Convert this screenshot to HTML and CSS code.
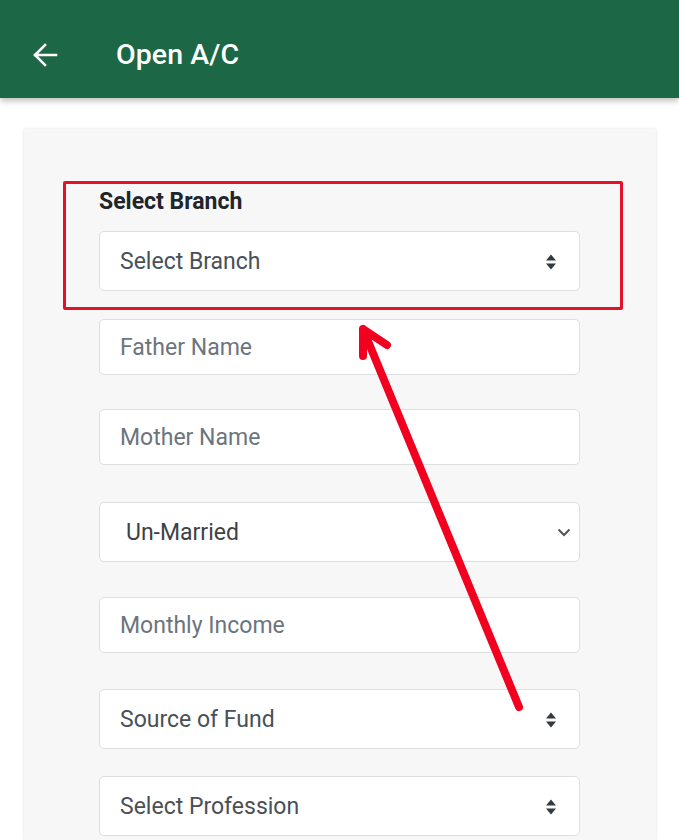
FILE: index.html
```html
<!DOCTYPE html>
<html>
<head>
<meta charset="utf-8">
<link rel="stylesheet" href="styles.css">
</head>
<body>
<header class="appbar">
  <svg class="back" width="26" height="26" viewBox="0 0 26 26"><path d="M24 13H3M13 3L3 13l10 10" fill="none" stroke="#fff" stroke-width="2.6" stroke-linecap="square" stroke-linejoin="miter"/></svg>
  <h1 class="title">Open A/C</h1>
</header>
<main class="page">
  <section class="card">
    <label class="label">Select Branch</label>
    <div class="control select h60">
      <span class="val">Select Branch</span>
      <svg class="updown" width="12" height="18" viewBox="0 0 12 18"><path d="M6 1.5L11 7.5H1z M6 16.5L11 10.5H1z" fill="#343a40"/></svg>
    </div>
    <div class="control input h56 mt28"><span class="ph">Father Name</span></div>
    <div class="control input h56 mt34"><span class="ph">Mother Name</span></div>
    <div class="control select native h60 mt37">
      <span class="val dark">Un-Married</span>
      <svg class="chev" width="14" height="9" viewBox="0 0 14 9"><path d="M1.5 1.5L7 7l5.5-5.5" fill="none" stroke="#555" stroke-width="2"/></svg>
    </div>
    <div class="control input h56 mt35"><span class="ph">Monthly Income</span></div>
    <div class="control select h60 mt36">
      <span class="val">Source of Fund</span>
      <svg class="updown" width="12" height="18" viewBox="0 0 12 18"><path d="M6 1.5L11 7.5H1z M6 16.5L11 10.5H1z" fill="#343a40"/></svg>
    </div>
    <div class="control select h60 mt27">
      <span class="val">Select Profession</span>
      <svg class="updown" width="12" height="18" viewBox="0 0 12 18"><path d="M6 1.5L11 7.5H1z M6 16.5L11 10.5H1z" fill="#343a40"/></svg>
    </div>
  </section>
</main>
<div class="highlight"></div>
<svg class="annot" width="679" height="840" viewBox="0 0 679 840"><path d="M363 356L363 329L387 345 M363 329L519 707" fill="none" stroke="#f2001f" stroke-width="8" stroke-linecap="round" stroke-linejoin="round"/></svg>
</body>
</html>
```
FILE: styles.css
```css
html, body { margin: 0; padding: 0; }
body {
  width: 679px; height: 840px; overflow: hidden;
  background: #fff;
  font-family: Roboto, "Noto Sans", "Liberation Sans", sans-serif;
  position: relative;
}
.appbar {
  height: 98px;
  box-sizing: border-box;
  padding-top: 10px;
  background: #1c6745;
  display: flex; align-items: center;
  box-shadow: 0 3px 6px rgba(0,0,0,0.25);
  position: relative; z-index: 2;
}
.back { margin-left: 32px; margin-top: 1px; }
.title {
  margin: 0 0 0 58px;
  color: #fff; font-size: 28.5px; font-weight: 500;
  letter-spacing: 0.1px;
}
.page { padding: 31px 23px 0 24px; }
.card {
  background: #f7f7f7;
  box-shadow: 0 0 3px rgba(0,0,0,0.12);
  padding: 59px 76px 0 75px;
  display: flex; flex-direction: column;
  height: 711px; box-sizing: border-box;
  overflow: hidden;
}
.label {
  font-size: 23px; font-weight: 700; color: #212529;
  line-height: 28px; margin-bottom: 15px;
}
.control {
  background: #fff;
  border: 1px solid #dcdfe2;
  border-radius: 5px;
  box-sizing: border-box;
  display: flex; align-items: center;
  padding-left: 20px; padding-right: 22px;
  font-size: 23px; flex-shrink: 0;
}
.h60 { height: 60px; }
.h56 { height: 56px; }
.mt27 { margin-top: 27px; }
.mt28 { margin-top: 28px; }
.mt34 { margin-top: 34px; }
.mt35 { margin-top: 35px; }
.mt36 { margin-top: 36px; }
.mt37 { margin-top: 37px; }
.ph { color: #6c757d; }
.val { color: #495057; flex: 1; }
.val.dark { color: #3d4247; }
.native { padding-left: 26px; padding-right: 8px; }
.updown { margin-top: 1px; }
.highlight {
  position: absolute; left: 63px; top: 181px;
  width: 560px; height: 129px; box-sizing: border-box;
  border: 3px solid #e4112a; border-radius: 2px;
  z-index: 3;
}
.annot { position: absolute; left: 0; top: 0; z-index: 4; }
```
